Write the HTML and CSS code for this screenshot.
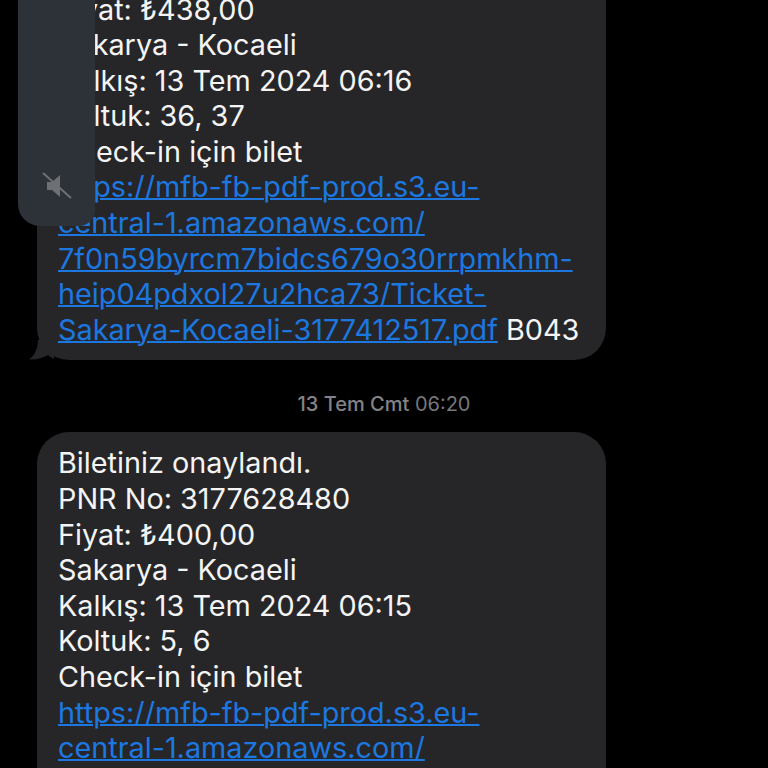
FILE: index.html
```html
<!DOCTYPE html>
<html lang="en">
<head>
    <meta charset="UTF-8">
    <meta name="viewport" content="width=device-width, initial-scale=1.0">
    <title>Mesajlar</title>
    <link rel="stylesheet" href="styles.css">
</head>
<body>
<div class="thread">
    <div class="bubble bubble-first">
        Fiyat: ₺438,00<br>
        Sakarya - Kocaeli<br>
        Kalkış: 13 Tem 2024 06:16<br>
        Koltuk: 36, 37<br>
        Check-in için bilet<br>
        <a href="#">https://mfb-fb-pdf-prod.s3.eu-<br>central-1.amazonaws.com/<br>7f0n59byrcm7bidcs679o30rrpmkhm-<br>heip04pdxol27u2hca73/Ticket-<br>Sakarya-Kocaeli-3177412517.pdf</a> B043
        <svg class="tail" width="26" height="20" viewBox="0 0 26 20">
            <path d="M10 0 C10 8 7 15 1 19.5 C9 20 15 18 20 15 C22 17 24 18 26 19 L26 0 Z"/>
        </svg>
    </div>

    <div class="stamp"><b>13 Tem Cmt</b> 06:20</div>

    <div class="bubble bubble-last">
        Biletiniz onaylandı.<br>
        PNR No: 3177628480<br>
        Fiyat: ₺400,00<br>
        Sakarya - Kocaeli<br>
        Kalkış: 13 Tem 2024 06:15<br>
        Koltuk: 5, 6<br>
        Check-in için bilet<br>
        <a href="#">https://mfb-fb-pdf-prod.s3.eu-<br>central-1.amazonaws.com/</a>
    </div>
</div>

<div class="pip">
    <svg width="32" height="32" viewBox="0 0 32 32">
        <path class="speaker" d="M6 12 H11 L19 5 V27 L11 20 H6 Z"/>
        <path class="slash" d="M2 3 L30 28"/>
    </svg>
</div>
</body>
</html>
```

FILE: styles.css
```css
html, body {
    height: 100%;
    overflow: hidden;
}

body {
    margin: 0;
    background: #000;
    color: #f4f4f4;
    font-family: Inter, "Noto Sans", sans-serif;
}

.thread {
    height: 790px;
    margin-top: -22px;
    padding-left: 37px;
    overflow: hidden;
}

.bubble {
    position: relative;
    width: 569px;
    box-sizing: border-box;
    padding: 13.5px 0 12.5px 21px;
    background: #262628;
    border-radius: 32px;
    font-size: 28.8px;
    line-height: 35.6px;
    white-space: nowrap;
}

.bubble-first {
    border-radius: 0 0 32px 32px;
}

.bubble-last {
    padding-bottom: 80px;
}

.bubble a {
    color: #1c78e0;
    text-decoration-thickness: 2px;
}

.tail {
    position: absolute;
    left: -9px;
    bottom: 0;
    fill: #262628;
}

.stamp {
    width: 694px;
    margin: 34px 0 18px;
    text-align: center;
    color: #77777b;
    font-size: 20px;
    line-height: 20px;
}

.stamp b {
    font-weight: 500;
    color: #838387;
}

.pip {
    position: absolute;
    left: 18px;
    top: -30px;
    width: 77px;
    height: 256px;
    display: flex;
    align-items: flex-end;
    justify-content: center;
    padding-bottom: 24px;
    box-sizing: border-box;
    background: #2d3138;
    border-radius: 0 0 16px 22px;
}

.speaker {
    fill: #6e7074;
}

.slash {
    stroke: #6e7074;
    stroke-width: 2;
}
```
